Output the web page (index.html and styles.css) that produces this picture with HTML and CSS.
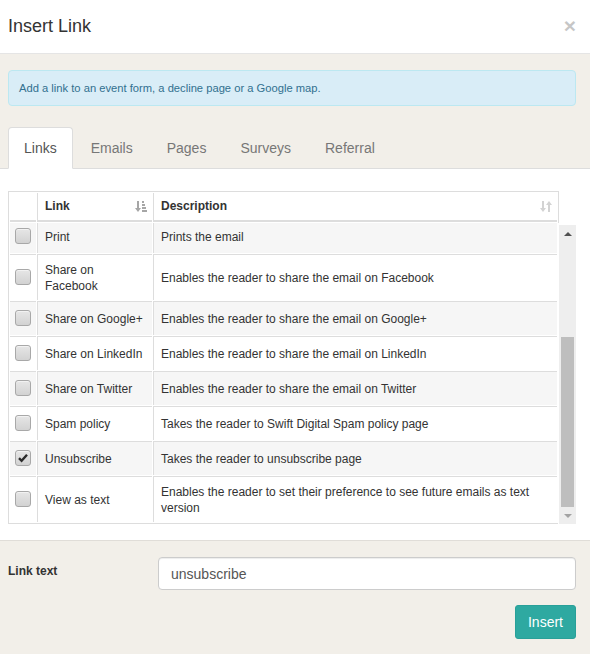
FILE: index.html
```html
<!DOCTYPE html>
<html lang="en">
<head>
    <meta charset="UTF-8">
    <meta name="viewport" content="width=device-width, initial-scale=1.0">
    <title>Insert Link</title>
    <link rel="stylesheet" href="styles.css">
</head>
<body>
    <div class="modal">
        <div class="modal-header">
            <h4 class="modal-title">Insert Link</h4>
            <button class="close" type="button">&times;</button>
        </div>

        <div class="modal-top">
            <div class="notice">
                <div class="alert">Add a link to an event form, a decline page or a Google map.</div>
            </div>
            <ul class="tabs">
                <li class="active">Links</li>
                <li>Emails</li>
                <li>Pages</li>
                <li>Surveys</li>
                <li>Referral</li>
            </ul>
        </div>

        <div class="tab-pane">
            <div class="grid-wrap">
                <div class="grid-head">
                    <table class="grid">
                        <colgroup><col class="c-check"><col class="c-link"><col></colgroup>
                        <thead>
                            <tr>
                                <th></th>
                                <th>
                                    <div class="th-inner">
                                        <span>Link</span>
                                        <!-- sorted ascending -->
                                        <svg class="sort sort-active" width="12" height="11" viewBox="0 0 12 11">
                                            <path d="M2 0h2v7h2l-3 4-3-4h2z"/>
                                            <rect x="7" y="0" width="2" height="2"/>
                                            <rect x="7" y="3" width="3" height="2"/>
                                            <rect x="7" y="6" width="4" height="2"/>
                                            <rect x="7" y="9" width="5" height="2"/>
                                        </svg>
                                    </div>
                                </th>
                                <th>
                                    <div class="th-inner">
                                        <span>Description</span>
                                        <svg class="sort" width="12" height="11" viewBox="0 0 12 11">
                                            <path d="M2 0h2v7h2l-3 4-3-4h2z"/>
                                            <path d="M8 11h2V4h2L9 0 6 4h2z"/>
                                        </svg>
                                    </div>
                                </th>
                            </tr>
                        </thead>
                    </table>
                </div>

                <div class="grid-body">
                    <div class="grid-view">
                        <table class="grid">
                            <colgroup><col class="c-check"><col class="c-link"><col></colgroup>
                            <tbody>
                                <tr>
                                    <td class="check"><span class="cb"></span></td>
                                    <td>Print</td>
                                    <td>Prints the email</td>
                                </tr>
                                <tr>
                                    <td class="check"><span class="cb"></span></td>
                                    <td>Share on Facebook</td>
                                    <td>Enables the reader to share the email on Facebook</td>
                                </tr>
                                <tr>
                                    <td class="check"><span class="cb"></span></td>
                                    <td>Share on Google+</td>
                                    <td>Enables the reader to share the email on Google+</td>
                                </tr>
                                <tr>
                                    <td class="check"><span class="cb"></span></td>
                                    <td>Share on LinkedIn</td>
                                    <td>Enables the reader to share the email on LinkedIn</td>
                                </tr>
                                <tr>
                                    <td class="check"><span class="cb"></span></td>
                                    <td>Share on Twitter</td>
                                    <td>Enables the reader to share the email on Twitter</td>
                                </tr>
                                <tr>
                                    <td class="check"><span class="cb"></span></td>
                                    <td>Spam policy</td>
                                    <td>Takes the reader to Swift Digital Spam policy page</td>
                                </tr>
                                <tr>
                                    <td class="check">
                                        <span class="cb checked">
                                            <svg width="14" height="14" viewBox="0 0 14 14"><path d="M3 7.2l2.6 2.6L11 3.8"/></svg>
                                        </span>
                                    </td>
                                    <td>Unsubscribe</td>
                                    <td>Takes the reader to unsubscribe page</td>
                                </tr>
                                <tr>
                                    <td class="check"><span class="cb"></span></td>
                                    <td>View as text</td>
                                    <td>Enables the reader to set their preference to see future emails as text version</td>
                                </tr>
                            </tbody>
                        </table>
                    </div>
                    <div class="scrollbar">
                        <span class="sb-btn"><span class="tri-up"></span></span>
                        <span class="sb-track"><span class="sb-thumb"></span></span>
                        <span class="sb-btn"><span class="tri-down"></span></span>
                    </div>
                </div>
            </div>
        </div>

        <div class="modal-footer">
            <div class="form-row">
                <label for="linkText">Link text</label>
                <input type="text" id="linkText" value="unsubscribe">
            </div>
            <div class="actions">
                <button class="btn-insert" type="button">Insert</button>
            </div>
        </div>
    </div>
</body>
</html>
```

FILE: styles.css
```css
body {
    margin: 0;
    font-family: "Liberation Sans", Arial, sans-serif;
    font-size: 12px;
    color: #333;
    background: #fff;
}
.modal {
    width: 590px;
}

/* header */
.modal-header {
    display: flex;
    justify-content: space-between;
    align-items: flex-start;
    padding: 14px 14px 14px 8px;
    border-bottom: 1px solid #e5e5e5;
}
.modal-title {
    margin: 0;
    font-size: 18px;
    font-weight: normal;
    line-height: 25px;
}
.close {
    margin-top: 1px;
    padding: 0;
    border: 0;
    background: none;
    font: bold 21px/1 "Liberation Sans", Arial, sans-serif;
    color: #000;
    opacity: .22;
}

/* beige strip with notice and tabs */
.modal-top {
    background: #f2efe9;
}
.notice {
    padding: 16px 14px 21px 8px;
}
.alert {
    padding: 9px 10px 8px;
    border: 1px solid #bce8f1;
    border-radius: 4px;
    background: #d9edf7;
    color: #31708f;
    font-size: 11.2px;
    line-height: 17px;
}
.tabs {
    display: flex;
    margin: 0;
    padding: 0 0 0 8px;
    list-style: none;
    border-bottom: 1px solid #ddd;
}
.tabs li {
    margin: 0 2px -1px 0;
    padding: 10px 15px;
    border: 1px solid transparent;
    border-radius: 4px 4px 0 0;
    font-size: 14px;
    line-height: 20px;
    color: #777;
}
.tabs li.active {
    background: #fff;
    border-color: #ddd #ddd transparent;
    color: #555;
}

/* links table */
.tab-pane {
    padding: 22px 14px 16px 8px;
}
.grid {
    width: 551px;
    table-layout: fixed;
    border-collapse: separate;
    border-spacing: 1px;
    border: 1px solid #ddd;
}
.c-check {
    width: 26px;
}
.c-link {
    width: 115px;
}
.grid-head .grid {
    border-bottom: 0;
}
.grid th {
    padding: 5px 7px 6px;
    border-bottom: 2px solid #ddd;
    text-align: left;
    font-weight: bold;
    line-height: 16px;
}
.grid th + th,
.grid td + td {
    border-left: 1px solid #ddd;
}
.th-inner {
    display: flex;
    justify-content: space-between;
    align-items: center;
}
.sort {
    fill: #d3d3d3;
    margin-right: -2px;
}
.sort-active {
    fill: #a6a6a6;
}

.grid-body {
    display: flex;
}
.grid-view {
    display: flex;
    flex-direction: column;
    justify-content: flex-end;
    height: 301px;
    overflow: hidden;
}
.grid-view .grid {
    border-top: 0;
}
.grid td {
    padding: 7px 7px 6px;
    border-top: 1px solid #ddd;
    line-height: 16px;
    vertical-align: middle;
}
.grid td.check {
    padding: 8px 0 9px;
}
.grid tbody tr:nth-child(odd) td {
    background: #f6f6f6;
}
.cb {
    display: block;
    box-sizing: border-box;
    width: 16px;
    height: 16px;
    margin: 0 auto;
    border: 1px solid #a8a8a8;
    border-radius: 3px;
    background: linear-gradient(#e6e6e6, #d2d2d2);
    box-shadow: inset 0 1px 0 #f2f2f2;
}
.cb svg {
    display: block;
    fill: none;
    stroke: #2b2b2b;
    stroke-width: 2.4;
}

/* scrollbar of the table body */
.scrollbar {
    display: flex;
    flex-direction: column;
    width: 17px;
    margin: 2px 0 0 1px;
    background: #eee;
}
.sb-btn {
    display: flex;
    align-items: center;
    justify-content: center;
    height: 17px;
}
.tri-up {
    border-style: solid;
    border-width: 0 4px 4px;
    border-color: transparent transparent #505050;
}
.tri-down {
    border-style: solid;
    border-width: 4px 4px 0;
    border-color: #a3a3a3 transparent transparent;
}
.sb-track {
    flex: 1;
    display: flex;
    flex-direction: column;
    justify-content: flex-end;
}
.sb-thumb {
    height: 170px;
    margin: 0 2px;
    background: #bebebe;
}

/* footer */
.modal-footer {
    padding: 16px 14px 15px 8px;
    border-top: 1px solid #e0ddd8;
    background: #f2efe9;
}
.form-row {
    display: grid;
    grid-template-columns: 150px 1fr;
}
.form-row label {
    padding-top: 6px;
    font-weight: bold;
    line-height: 17px;
}
.form-row input {
    box-sizing: border-box;
    height: 33px;
    padding: 6px 12px;
    border: 1px solid #ccc;
    border-radius: 4px;
    box-shadow: inset 0 1px 1px rgba(0, 0, 0, .075);
    font: 14px "Liberation Sans", Arial, sans-serif;
    color: #555;
}
.actions {
    display: flex;
    justify-content: flex-end;
    margin-top: 15px;
}
.btn-insert {
    height: 34px;
    padding: 6px 12px;
    border: 1px solid #29a099;
    border-radius: 3px;
    background: #2ea9a1;
    color: #fff;
    font: 14px/20px "Liberation Sans", Arial, sans-serif;
}
```
